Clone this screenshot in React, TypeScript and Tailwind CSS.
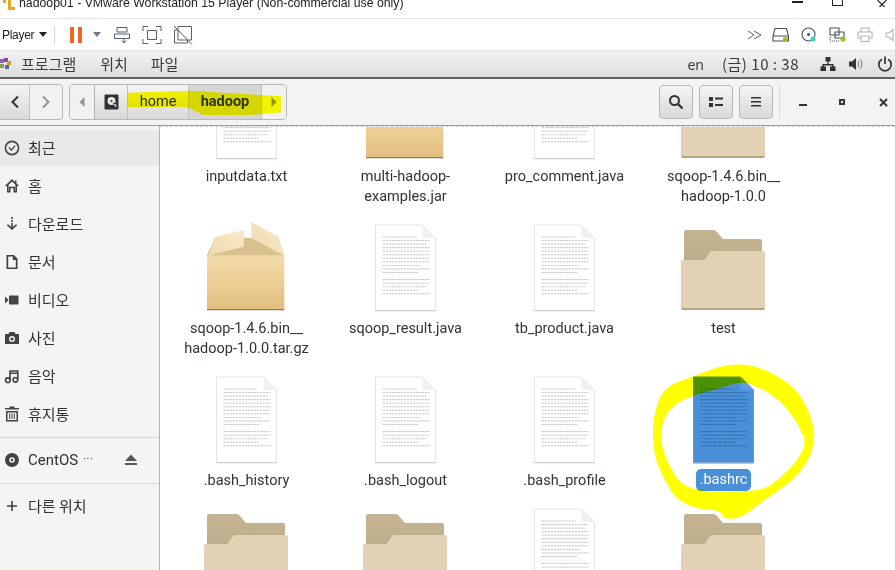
const KR = "font-['Noto_Sans_CJK_KR','Noto_Sans',sans-serif]";
const UI = "font-['Roboto','Noto_Sans',sans-serif]";

const LINE_WIDTHS = [34, 47, 44, 47, 47, 47, 47, 47, 38, 47, 36, 0, 47, 47, 44, 36, 47];

function Doc({ selected }: { selected?: boolean }) {
  return (
    <svg width="61" height="88" viewBox="-0.5 -1 61 88">
      <path
        d="M0 0H47L60 13V86H0Z"
        fill={selected ? "#4a90d9" : "#fff"}
        stroke={selected ? "#5b9bdd" : "#e4e4e4"}
        strokeWidth="1"
      />
      <path d="M47 0V13H60Z" fill={selected ? "#5d9ee0" : "#f0f0f0"} />
      <path d="M0 85.5H60" stroke={selected ? "#7fa9d4" : "#cfcfcf"} />
      {LINE_WIDTHS.map((w, i) =>
        w ? (
          <path
            key={i}
            d={`M7 ${12 + i * 3.55}h${w}`}
            stroke={selected ? "#1f4f86" : "#8a8a8a"}
            strokeWidth="0.8"
            strokeDasharray="2.5 0.5"
            opacity={selected ? 0.65 : 0.55}
          />
        ) : null
      )}
    </svg>
  );
}

function Folder() {
  return (
    <svg width="85" height="82" viewBox="0 0 85 82">
      <defs>
        <linearGradient id="fb" x1="0" y1="0" x2="0" y2="1">
          <stop offset="0" stopColor="#c5b491" />
          <stop offset="0.7" stopColor="#bfae8b" />
          <stop offset="1" stopColor="#a59472" />
        </linearGradient>
      </defs>
      <path d="M3 2Q3 0 5 0H32Q34 0 35 1L42 9H79Q81 9 81 11V40H3Z" fill="url(#fb)" />
      <path d="M0 32Q0 30 2 30H22Q24 30 25 28L29 22Q30 21 32 21H82Q84 21 84 23V77Q84 80 81 80H3Q0 80 0 77Z" fill="#e3d1b5" />
      <path d="M0 77Q0 80 3 80H81Q84 80 84 77V76.5Q84 78 81 78H3Q0 78 0 76.5Z" fill="#b8a483" />
    </svg>
  );
}

function Box() {
  return (
    <svg width="83" height="92" viewBox="135 15 249 276">
      <defs>
        <linearGradient id="bb" x1="0" y1="0" x2="0" y2="1">
          <stop offset="0" stopColor="#f4dcaa" />
          <stop offset="1" stopColor="#e3bf80" />
        </linearGradient>
        <linearGradient id="bf" x1="0" y1="1" x2="1" y2="0">
          <stop offset="0" stopColor="#efd9ac" />
          <stop offset="1" stopColor="#f8eacb" />
        </linearGradient>
      </defs>
      <path d="M165 68H355L372 122H140Z" fill="#d9c08f" />
      <path d="M144 122L166 65L253 45L251 95Z" fill="url(#bf)" />
      <path d="M273 20L355 65L372 122L275 70Z" fill="url(#bf)" />
      <rect x="141" y="122" width="232" height="160" fill="url(#bb)" />
      <path d="M141 282H373V286H141Z" fill="#8c7a58" />
    </svg>
  );
}

type FileItem = { icon: "doc" | "folder" | "box"; lines?: string[]; selected?: boolean };

const FILES: FileItem[] = [
  { icon: "doc", lines: ["inputdata.txt"] },
  { icon: "box", lines: ["multi-hadoop-", "examples.jar"] },
  { icon: "doc", lines: ["pro_comment.java"] },
  { icon: "folder", lines: ["sqoop-1.4.6.bin__", "hadoop-1.0.0"] },
  { icon: "box", lines: ["sqoop-1.4.6.bin__", "hadoop-1.0.0.tar.gz"] },
  { icon: "doc", lines: ["sqoop_result.java"] },
  { icon: "doc", lines: ["tb_product.java"] },
  { icon: "folder", lines: ["test"] },
  { icon: "doc", lines: [".bash_history"] },
  { icon: "doc", lines: [".bash_logout"] },
  { icon: "doc", lines: [".bash_profile"] },
  { icon: "doc", lines: [".bashrc"], selected: true },
  { icon: "folder" },
  { icon: "folder" },
  { icon: "doc" },
  { icon: "folder" },
];

function FileCell({ item }: { item: FileItem }) {
  return (
    <div className="flex flex-col items-center pb-[13px]">
      <div className="h-[92px] flex items-end justify-center">
        {item.icon === "doc" && <Doc selected={item.selected} />}
        {item.icon === "folder" && <Folder />}
        {item.icon === "box" && <Box />}
      </div>
      {item.lines && (
        <div
          className={
            item.selected
              ? `mt-[5px] px-[4px] rounded-[5px] bg-[#4a90d9] text-white text-[14.5px] leading-[22px] ${UI}`
              : `mt-[7px] text-center text-[#2e3436] text-[14.5px] leading-[20px] ${UI}`
          }
        >
          {item.lines.map((l) => (
            <div key={l}>{l}</div>
          ))}
        </div>
      )}
    </div>
  );
}

const ICON = "#3f4446";

const SideIcons: Record<string, React.ReactNode> = {
  recent: (
    <>
      <circle cx="8" cy="8" r="6.6" fill="none" stroke={ICON} strokeWidth="1.6" />
      <path d="M4.8 7.4L7.4 10L11 5.8" fill="none" stroke={ICON} strokeWidth="1.2" />
    </>
  ),
  home: <path d="M8 1L0.8 8H3V14.5H6.5V10.2H9.5V14.5H13V8H15.2L12.5 5.4V2.5H11V4L8 1ZM8 3.4L11.4 6.8V13H11V8.8H5V13H4.6V6.8Z" fill={ICON} fillRule="evenodd" />,
  down: <path d="M7.2 1H8.8V3H7.2ZM7.2 4H8.8V6H7.2ZM7.2 7H8.8V11L12 8.2L13.2 9.2L8 14L2.8 9.2L4 8.2L7.2 11Z" fill={ICON} />,
  doc: <path d="M2.5 1H10L13.5 4.8V15H2.5ZM4.2 2.6V13.4H11.8V6H8.8V2.6Z" fill={ICON} fillRule="evenodd" />,
  video: (
    <>
      <rect x="5" y="3.5" width="9.5" height="9" rx="0.8" fill={ICON} />
      <path d="M1 4.5V11.5L4.6 8Z" fill={ICON} />
    </>
  ),
  camera: <path d="M1 4H4.5L5.6 2H10.4L11.5 4H15V14H1ZM8 6A3 3 0 1 0 8 12A3 3 0 1 0 8 6ZM8 7.4A1.6 1.6 0 1 1 8 10.6A1.6 1.6 0 1 1 8 7.4Z" fill={ICON} fillRule="evenodd" />,
  music: (
    <>
      <path d="M5.2 2.2H14.6V11.8H13V6H6.8V12.4H5.2ZM6.8 3.8V4.6H13V3.8Z" fill={ICON} fillRule="evenodd" />
      <circle cx="3.8" cy="12.2" r="2.3" fill="none" stroke={ICON} strokeWidth="1.6" />
      <circle cx="11.4" cy="11.8" r="2.3" fill="none" stroke={ICON} strokeWidth="1.6" />
    </>
  ),
  trash: <path d="M5.5 0.5H10.5V2H15V3.5H1V2H5.5ZM2 5H14V15.5H2ZM3.5 6.5V14H12.5V6.5ZM5.2 7.5H6.2V13H5.2ZM7.5 7.5H8.5V13H7.5ZM9.8 7.5H10.8V13H9.8Z" fill={ICON} fillRule="evenodd" />,
  disc: <path d="M8 1A7 7 0 1 0 8 15A7 7 0 1 0 8 1ZM8 5.2A2.8 2.8 0 1 1 8 10.8A2.8 2.8 0 1 1 8 5.2ZM8 6.8A1.2 1.2 0 1 0 8 9.2A1.2 1.2 0 1 0 8 6.8Z" fill={ICON} fillRule="evenodd" />,
  plus: <path d="M7.2 3H8.8V7.2H13V8.8H8.8V13H7.2V8.8H3V7.2H7.2Z" fill={ICON} />,
};

function SideRow({ icon, label, active, children }: { icon: string; label: string; active?: boolean; children?: React.ReactNode }) {
  return (
    <div className={`my-px h-[36px] flex items-center pl-[4px] ${active ? "bg-[#e9e9e8]" : ""}`}>
      <svg width="16" height="16" viewBox="0 0 16 16" className="shrink-0">
        {SideIcons[icon]}
      </svg>
      <span className="ml-[8px] text-[15px] text-[#2e3436] whitespace-nowrap">{label}</span>
      {children}
    </div>
  );
}

function Sidebar() {
  return (
    <aside className={`w-[160px] shrink-0 flex flex-col bg-[#f4f4f3] border-r border-[#b4b4b2] pt-[3px] ${KR}`}>
      <SideRow icon="recent" label="최근" active />
      <SideRow icon="home" label="홈" />
      <SideRow icon="down" label="다운로드" />
      <SideRow icon="doc" label="문서" />
      <SideRow icon="video" label="비디오" />
      <SideRow icon="camera" label="사진" />
      <SideRow icon="music" label="음악" />
      <SideRow icon="trash" label="휴지통" />
      <div className="mt-[4px] border-t border-[#d8d8d6]" />
      <div className="mt-[3px] flex flex-col">
        <div className="my-px h-[36px] flex items-center pl-[4px]">
          <svg width="16" height="16" viewBox="0 0 16 16" className="shrink-0">
            {SideIcons.disc}
          </svg>
          <span className={`ml-[8px] text-[15px] text-[#2e3436] whitespace-nowrap ${UI}`}>CentOS</span>
          <span className={`ml-[5px] text-[11px] tracking-[0.5px] text-[#2e3436] ${UI}`}>···</span>
          <svg width="14" height="12" viewBox="0 0 14 12" className="ml-auto mr-[21px]">
            <path d="M7 0.5L13 7H1ZM1 9H13V11H1Z" fill="#555a5c" />
          </svg>
        </div>
      </div>
      <div className="mt-[4px] border-t border-[#d8d8d6]" />
      <div className="mt-[3px] flex flex-col">
        <SideRow icon="plus" label="다른 위치" />
      </div>
    </aside>
  );
}

const BTN = "h-[34px] flex items-center justify-center bg-gradient-to-b from-[#f4f4f4] to-[#d9d9d7]";

function Stroke({ d, w = 20, h = 20, c = "#55626c", sw = 1 }: { d: string; w?: number; h?: number; c?: string; sw?: number }) {
  return (
    <svg width={w} height={h} viewBox={`0 0 ${w} ${h}`}>
      <path d={d} fill="none" stroke={c} strokeWidth={sw} />
    </svg>
  );
}

function TitleBar() {
  return (
    <div className="h-[19px] shrink-0 flex bg-white border-b border-[#e4e4e4] overflow-hidden">
      <svg width="12" height="10" viewBox="0 0 12 10" className="ml-[3px]">
        <path d="M0 0H3V3H0ZM5 0H8V7H12V10H5Z" fill="#e8a820" />
      </svg>
      <span className="ml-[4px] -mt-[6px] h-[18px] text-[12.3px] leading-[18px] text-[#222] whitespace-nowrap font-['Liberation_Sans',sans-serif]">
        hadoop01 - VMware Workstation 15 Player (Non-commercial use only)
      </span>
      <div className="ml-auto flex items-start">
        <div className="w-[11px] h-[1.5px] bg-[#222] mt-[1px]" />
        <div className="ml-[29px] w-[11px] h-[6px] border-x border-b border-[#222]" />
        <svg width="11" height="7" viewBox="0 0 11 7" className="ml-[34px] mr-[7px]">
          <path d="M0.5 0L7.5 7M9.5 0L2.5 7" stroke="#222" strokeWidth="1.1" />
        </svg>
      </div>
    </div>
  );
}

function VmToolbar() {
  return (
    <div className="h-[32px] shrink-0 flex items-center bg-white border-b border-[#e6e6e6]">
      <span className="ml-[2px] w-[37px] text-[12px] tracking-[-0.3px] text-[#222] font-['Liberation_Sans',sans-serif]">Player</span>
      <svg width="8" height="5" viewBox="0 0 8 5">
        <path d="M0 0H8L4 5Z" fill="#222" />
      </svg>
      <div className="ml-[7px] w-px h-[18px] bg-[#d5d5d5]" />
      <div className="ml-[15px] flex gap-[4px]">
        <div className="w-[4px] h-[16px] bg-[#f26522]" />
        <div className="w-[4px] h-[16px] bg-[#f26522]" />
      </div>
      <svg width="8" height="5" viewBox="0 0 8 5" className="ml-[11px]">
        <path d="M0 0H8L4 5Z" fill="#6a7a86" />
      </svg>
      <div className="ml-[12px]">
        <Stroke d="M4 2.5H14V7H4ZM1.5 9H16.5V13.5H1.5ZM11 13V17M8.5 15.5L11 18L13.5 15.5" />
      </div>
      <div className="ml-[9px]">
        <Stroke d="M1 6V1.5H6M14 1.5H19V6M19 14V18.5H14M6 18.5H1V14M5.5 5.5H14.5V14.5H5.5Z" />
      </div>
      <div className="ml-[11px]">
        <Stroke d="M5 5H1.5V18H14.5V15M5 1.5H18.5V15H5ZM1 1L19 19.5" />
      </div>
      <div className="ml-auto flex items-center">
        <svg width="14" height="10" viewBox="0 0 14 10" className="mr-[10px]">
          <path d="M0 1L6 5L0 9M6 1L13 5L6 9" fill="none" stroke="#56646e" strokeWidth="1" />
        </svg>
        <svg width="18" height="16" viewBox="0 0 18 16" className="mr-[11px]">
          <path d="M3 1.5H14.5L16.5 9V14H1V9ZM1 9H16.5" fill="none" stroke="#44525c" strokeWidth="1.1" />
          <circle cx="13.5" cy="12.5" r="2.6" fill="#8cc81e" />
        </svg>
        <svg width="16" height="16" viewBox="0 0 16 16" className="mr-[12px]">
          <circle cx="7.5" cy="7.5" r="6.5" fill="none" stroke="#44525c" strokeWidth="1.1" />
          <circle cx="7.5" cy="7.5" r="1.5" fill="#44525c" />
          <circle cx="12" cy="12" r="2.6" fill="#3ad1cc" />
        </svg>
        <svg width="18" height="16" viewBox="0 0 18 16" className="mr-[10px]">
          <path d="M1 1H10V8H1ZM6 5H15V11H6Z" fill="none" stroke="#44525c" strokeWidth="1.1" />
          <path d="M1 10V14H11" fill="none" stroke="#44525c" strokeWidth="1" strokeDasharray="1 1" />
          <circle cx="14" cy="12" r="2.6" fill="#8cc81e" />
        </svg>
        <svg width="16" height="16" viewBox="0 0 16 16" className="mr-[12px]">
          <path d="M4 5V1H12V5M1 5H15V11H12M4 11H1V5M4 9H12V14.5H4Z" fill="none" stroke="#aab4ba" strokeWidth="1.1" />
        </svg>
        <svg width="10" height="14" viewBox="0 0 10 14">
          <path d="M1 5H4L8 1.5V12.5L4 9H1Z" fill="none" stroke="#aab4ba" strokeWidth="1.1" />
        </svg>
      </div>
    </div>
  );
}

function GnomeBar() {
  return (
    <div className={`h-[28px] shrink-0 flex items-center bg-gradient-to-b from-[#f2f2f2] to-[#dedede] border-b-2 border-[#5f6163] text-[15px] text-[#3a3d3f] ${KR}`}>
      <svg width="12" height="12" viewBox="0 0 12 12">
        <rect x="0" y="1" width="4" height="4" fill="#9b5fa8" />
        <rect x="4" y="0" width="4" height="4" fill="#8c4a9c" />
        <rect x="7" y="3" width="4" height="4" fill="#c4a02c" />
        <rect x="0" y="6" width="4" height="4" fill="#8ba04a" />
        <rect x="5" y="7" width="4" height="4" fill="#4a6fa8" />
      </svg>
      <span className="ml-[9px]">프로그램</span>
      <span className="ml-[24px]">위치</span>
      <span className="ml-[23px]">파일</span>
      <div className="ml-auto flex items-center">
        <span className="text-[14px] font-['Noto_Sans',sans-serif]">en</span>
        <span className="ml-[18px] tracking-[0.5px] text-[15px]">(금) 10 : 38</span>
        <svg width="16" height="16" viewBox="0 0 16 16" className="ml-[21px]">
          <path d="M5.5 1H10.5V5.5H8.6V8H13.5V10.5H15.5V15H10V10.5H12V9.4H4V10.5H6V15H0.5V10.5H2.5V8H7.4V5.5H5.5Z" fill="#2f3335" />
        </svg>
        <svg width="16" height="16" viewBox="0 0 16 16" className="ml-[12px]">
          <path d="M1 5.5H4L8 2V14L4 10.5H1Z" fill="#2f3335" />
          <path d="M10 5Q11.5 8 10 11M12.5 3.5Q15 8 12.5 12.5" fill="none" stroke="#8b8e90" strokeWidth="1.3" />
        </svg>
        <svg width="16" height="16" viewBox="0 0 16 16" className="ml-[13px] mr-[2px]">
          <path d="M5 3.2A6.2 6.2 0 1 0 11 3.2M8 0.5V8" fill="none" stroke="#2f3335" strokeWidth="1.7" />
        </svg>
      </div>
    </div>
  );
}

function HeaderBar() {
  return (
    <div className="h-[47px] shrink-0 flex items-center bg-[#f3f3f3] border-b border-[#9d9d9b]">
      <div className="w-[63px] flex rounded-r-[4px] border border-l-0 border-[#b8b8b6] overflow-hidden">
        <div className={`${BTN} w-[30px] border-r border-[#c2c2c0]`}>
          <Stroke w={10} h={14} d="M8 1.5L2.5 7L8 12.5" c="#2e3436" sw={2} />
        </div>
        <div className="h-[34px] flex-1 flex items-center justify-center bg-[#f1f1f1]">
          <Stroke w={10} h={14} d="M2 1.5L7.5 7L2 12.5" c="#8f9496" sw={2} />
        </div>
      </div>
      <div className="ml-[6px] w-[218px] flex rounded-[4px] border border-[#b8b8b6] overflow-hidden">
        <div className="h-[34px] w-[25px] flex items-center justify-center bg-[#f1f1f1] border-r border-[#b0b0ae]">
          <svg width="6" height="10" viewBox="0 0 6 10">
            <path d="M5.5 0V10L0.5 5Z" fill="#8f9496" />
          </svg>
        </div>
        <div className={`${BTN} w-[33px] border-r border-[#c2c2c0]`}>
          <svg width="15" height="16" viewBox="0 0 15 16">
            <path d="M1.5 0.5H13.5Q14.5 0.5 14.5 1.5V14.5Q14.5 15.5 13.5 15.5H1.5Q0.5 15.5 0.5 14.5V1.5Q0.5 0.5 1.5 0.5ZM7.5 3A4 4 0 1 0 7.5 11A4 4 0 1 0 7.5 3ZM7.5 6A1 1 0 1 1 7.5 8A1 1 0 1 1 7.5 6ZM9 9L11.5 13L12.8 12L10 8.5Z" fill="#2e3436" fillRule="evenodd" />
          </svg>
        </div>
        <div className={`${BTN} w-[61px] border-r border-[#c2c2c0] text-[14.5px] text-[#2e3436] ${UI}`}>home</div>
        <div className={`h-[34px] w-[73px] flex items-center justify-center bg-[#d6d6d4] border-r border-[#c2c2c0] text-[14.5px] font-bold text-[#2e3436] ${UI}`}>hadoop</div>
        <div className="h-[34px] flex-1 flex items-center justify-center bg-[#f1f1f1]">
          <svg width="6" height="10" viewBox="0 0 6 10">
            <path d="M0.5 0V10L5.5 5Z" fill="#8f9496" />
          </svg>
        </div>
      </div>
      <div className="ml-auto flex items-center">
        <div className={`${BTN} w-[34px] rounded-[4px] border border-[#b8b8b6]`}>
          <svg width="16" height="16" viewBox="0 0 16 16">
            <circle cx="6.5" cy="6.5" r="4.5" fill="none" stroke="#2e3436" strokeWidth="2" />
            <path d="M10 10L14.5 14.5" stroke="#2e3436" strokeWidth="2.4" />
          </svg>
        </div>
        <div className={`${BTN} ml-[6px] w-[34px] rounded-[4px] border border-[#b8b8b6]`}>
          <svg width="14" height="12" viewBox="0 0 14 12">
            <path d="M0 1H4V5H0ZM0 7H4V11H0ZM6 1.5H14V3.5H6ZM6 8H14V10H6Z" fill="#2e3436" />
          </svg>
        </div>
        <div className={`${BTN} ml-[6px] w-[34px] rounded-[4px] border border-[#b8b8b6]`}>
          <svg width="12" height="12" viewBox="0 0 12 12">
            <path d="M1 1H11V2.6H1ZM1 5H11V6.6H1ZM1 9H11V10.6H1Z" fill="#2e3436" />
          </svg>
        </div>
        <div className="ml-[6px] w-px h-[34px] bg-[#dcdcdc]" />
        <div className="w-[115px] flex items-center">
          <div className="ml-[19px] mt-[6px] w-[8px] h-[2px] bg-[#2e3436]" />
          <div className="ml-[32px] w-[6px] h-[6px] border-2 border-[#2e3436]" />
          <svg width="9" height="9" viewBox="0 0 9 9" className="ml-[34px]">
            <path d="M1 1L8 8M8 1L1 8" stroke="#2e3436" strokeWidth="2" />
          </svg>
        </div>
      </div>
    </div>
  );
}

// closed curve through the midpoints of a hand-traced outline
function smooth(pts: number[][]) {
  const mid = (a: number[], b: number[]) => `${(a[0] + b[0]) / 2} ${(a[1] + b[1]) / 2}`;
  let d = `M${mid(pts[pts.length - 1], pts[0])}`;
  pts.forEach((p, i) => {
    d += `Q${p[0]} ${p[1]} ${mid(p, pts[(i + 1) % pts.length])}`;
  });
  return d + "Z";
}

const RING_OUTER = [[280, 26], [350, 33], [422, 68], [472, 108], [507, 168], [524, 230], [517, 292], [482, 352], [432, 397], [362, 442], [304, 490], [246, 492], [245, 467], [170, 462], [108, 432], [78, 382], [48, 322], [38, 260], [40, 188], [58, 128], [83, 93], [150, 68], [220, 40]];
const RING_INNER = [[300, 80], [240, 100], [160, 120], [100, 150], [70, 190], [60, 260], [90, 340], [130, 395], [200, 410], [300, 410], [370, 405], [420, 370], [470, 320], [500, 265], [480, 220], [450, 170], [400, 120], [340, 90]];

export default function App() {
  return (
    <div className="relative w-[895px] h-[570px] overflow-hidden flex flex-col bg-white">
      <TitleBar />
      <VmToolbar />
      <GnomeBar />
      <HeaderBar />
      <div className="flex-1 min-h-0 flex">
        <Sidebar />
        <main className="flex-1 overflow-hidden border-t border-dashed border-[#d4d4d4]">
          <div className="-mt-[59px] pl-[7px] grid grid-cols-[repeat(4,159px)]">
            {FILES.map((f, i) => (
              <FileCell key={i} item={f} />
            ))}
          </div>
        </main>
      </div>

      {/* marker scribbles drawn over the screenshot */}
      <svg width="450" height="130" viewBox="0 0 1350 390" className="absolute left-0 top-0 mix-blend-multiply pointer-events-none">
        <path d="M383 278L570 272L780 285L843 288V337L750 345L610 345L560 320L383 322Z" fill="#ffff00" />
      </svg>
      <svg width="190" height="175" viewBox="0 0 570 525" className="absolute left-[640px] top-[355px] mix-blend-multiply pointer-events-none">
        <path fillRule="evenodd" fill="#ffff00" d={smooth(RING_OUTER) + smooth(RING_INNER)} />
      </svg>
    </div>
  );
}
